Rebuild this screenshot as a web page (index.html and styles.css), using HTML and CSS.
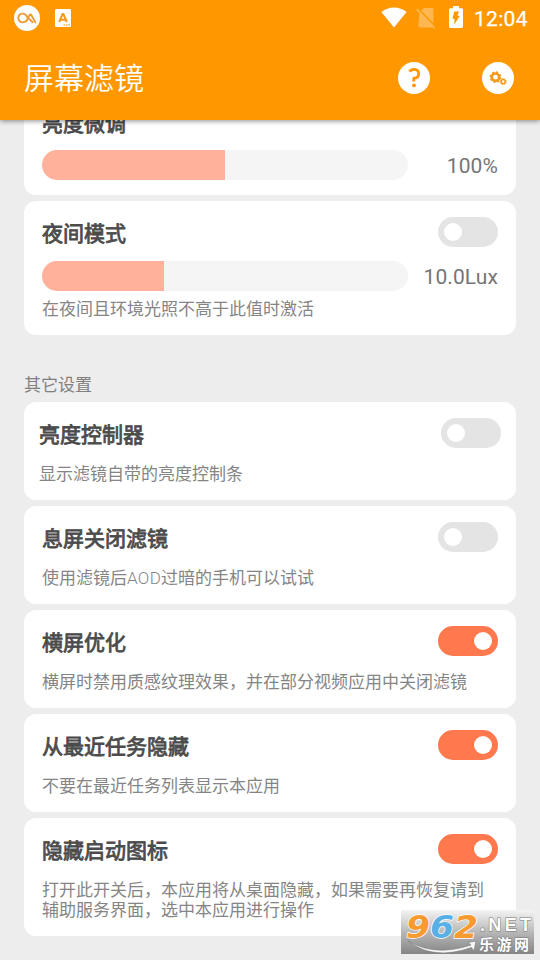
FILE: index.html
```html
<!DOCTYPE html>
<html lang="zh-CN">
<head>
<meta charset="utf-8">
<title>屏幕滤镜</title>
<link rel="stylesheet" href="styles.css">
</head>
<body>
<header class="top">
  <div class="status">
    <svg class="ico-cc" width="26" height="26" viewBox="0 0 26 26"><circle cx="13" cy="13" r="13" fill="#fff"/><path d="M11.8 16.2Q10.6 17.4 8.6 17.4A4.4 4.4 0 1 1 12.2 10.4L13.4 12.2M12.2 16.4L15.5 10.2Q16.4 8.6 17.4 10.2L21.4 17.4M14.6 13.4L18.6 17.2" fill="none" stroke="#ed9a35" stroke-width="1.9" stroke-linejoin="round" stroke-linecap="round"/></svg>
    <svg class="ico-a" width="16" height="18" viewBox="0 0 16 18"><rect width="16" height="18" rx="1.2" fill="#fff"/><path d="M4.2 13L7.6 5H8.4L11.8 13M5.8 10.8H10.2" fill="none" stroke="#f39a1c" stroke-width="2"/><path d="M8.5 15.8h1.6M11 15.8h1.6M13.4 15.8h1.6" stroke="#f3a84a" stroke-width="1.3"/></svg>
    <svg class="ico-wifi" width="26" height="21" viewBox="0 0 26 21"><path d="M.4 5Q6 .4 13 .4T25.6 5L13 20.6z" fill="#fff"/></svg>
    <svg class="ico-sim" width="20" height="22" viewBox="0 0 20 22"><path d="M3.5 4.8L8.2.9H16Q17.4.9 17.4 2.3V20.4H3.6Q2.3 20.4 2.3 19z" fill="#ffb851"/><path d="M1.4 1L19.2 19.4" stroke="#ff9800" stroke-width="1.8"/><path d="M.6 2.2L18.6 20.8" stroke="#ffb851" stroke-width="1.7"/></svg>
    <svg class="ico-bat" width="14" height="22" viewBox="0 0 14 22"><path d="M4 0h6v2.2h2.6Q14 2.2 14 3.6V20.6Q14 22 12.6 22H1.4Q0 22 0 20.6V3.6Q0 2.2 1.4 2.2H4z" fill="#fff"/><path d="M5.2 5.6H10L8.4 9.8H10.8L5.4 18.6V12.8H3.4z" fill="#ff9800"/></svg>
    <span class="clock">12:04</span>
  </div>
  <div class="bar">
    <h1>屏幕滤镜</h1>
    <svg class="help" width="32" height="32" viewBox="0 0 32 32"><circle cx="16" cy="16" r="16" fill="#fff"/><path d="M11.5 9.6Q12.8 7.3 16.1 7.3Q20.7 7.3 20.7 11.9Q20.7 16 15.8 16.2V19.6" fill="none" stroke="#ff9800" stroke-width="2.8" stroke-linejoin="round"/><circle cx="16" cy="23.4" r="1.9" fill="#ff9800"/></svg>
    <svg width="32" height="32" viewBox="0 0 32 32"><circle cx="16" cy="16" r="16" fill="#fff"/><g fill="none" stroke="#f69a16"><circle cx="13.5" cy="15.2" r="3.7" stroke-width="2.6"/><circle cx="13.5" cy="15.2" r="5.2" stroke-width="1.4" stroke-dasharray="2.04 2.04"/><circle cx="21.2" cy="19.6" r="2.1" stroke-width="1.5"/><circle cx="21.2" cy="19.6" r="3" stroke-width="1" stroke-dasharray="1.18 1.18"/></g></svg>
  </div>
</header>
<main>
  <section class="card fine">
    <div class="row"><h2>亮度微调</h2></div>
    <div class="row"><div class="slider"><i class="half"></i></div><span class="value">100%</span></div>
  </section>
  <section class="card night">
    <div class="row"><h2>夜间模式</h2><span class="switch"></span></div>
    <div class="row"><div class="slider"><i class="third"></i></div><span class="value">10.0Lux</span></div>
    <p>在夜间且环境光照不高于此值时激活</p>
  </section>
  <div class="label">其它设置</div>
  <section class="card wide">
    <div class="row"><h2>亮度控制器</h2><span class="switch"></span></div>
    <p>显示滤镜自带的亮度控制条</p>
  </section>
  <section class="card">
    <div class="row"><h2>息屏关闭滤镜</h2><span class="switch"></span></div>
    <p>使用滤镜后<span class="latin">AOD</span>过暗的手机可以试试</p>
  </section>
  <section class="card">
    <div class="row"><h2>横屏优化</h2><span class="switch on"></span></div>
    <p>横屏时禁用质感纹理效果，并在部分视频应用中关闭滤镜</p>
  </section>
  <section class="card">
    <div class="row"><h2>从最近任务隐藏</h2><span class="switch on"></span></div>
    <p>不要在最近任务列表显示本应用</p>
  </section>
  <section class="card tall">
    <div class="row"><h2>隐藏启动图标</h2><span class="switch on"></span></div>
    <p>打开此开关后，本应用将从桌面隐藏，如果需要再恢复请到<br>辅助服务界面，选中本应用进行操作</p>
  </section>
</main>
<svg class="mark" width="134" height="46" viewBox="0 0 134 46">
  <defs>
    <linearGradient id="g" x1="0" y1="0" x2="0" y2="1"><stop offset="0" stop-color="#f4f4f4"/><stop offset=".5" stop-color="#b8b8b8"/><stop offset="1" stop-color="#858585"/></linearGradient>
  </defs>
  <rect x="0" y="0" width="133" height="44" fill="url(#g)"/>
  <g class="digits">
    <text x="5" y="28" textLength="24" lengthAdjust="spacingAndGlyphs">9</text>
    <text class="blue" x="29" y="28" textLength="24" lengthAdjust="spacingAndGlyphs">6</text>
    <text x="53" y="28" textLength="24" lengthAdjust="spacingAndGlyphs">2</text>
  </g>
  <path d="M7 31Q34 47 70 35L67 32.5L75 31L73 41L70.5 37.5Q32 51 7 31z" fill="#f6f6f6" stroke="#777" stroke-width=".6"/>
  <text class="net" x="79" y="21" textLength="51">.NET</text>
  <text class="site" x="78" y="40" textLength="50">乐游网</text>
</svg>
</body>
</html>
```
FILE: styles.css
```css
* { box-sizing: border-box; margin: 0; padding: 0; }
body {
  width: 540px;
  height: 960px;
  overflow: hidden;
  position: relative;
  background: #ededed;
  font-family: Roboto, "Noto Sans CJK SC", sans-serif;
}
svg { display: block; flex: none; }
.top {
  position: relative;
  z-index: 2;
  height: 120px;
  background: #ff9800;
  box-shadow: 0 1px 5px rgba(0, 0, 0, .45);
  color: #fff;
}
.status { display: flex; align-items: center; height: 36px; padding: 0 12px 0 14px; }
.ico-a { margin-left: 15px; }
.ico-wifi { margin-left: auto; margin-top: -2px; }
.ico-sim { margin-left: 9px; }
.ico-bat { margin-left: 13px; margin-top: -2px; }
.clock { width: 54px; margin-left: 11px; padding-top: 2px; font-size: 21px; line-height: 36px; letter-spacing: .3px; -webkit-text-stroke: .25px #fff; white-space: nowrap; }
.bar { display: flex; align-items: center; height: 84px; padding: 0 26px 0 24px; }
h1 { flex: 1; padding-top: 2px; font-size: 30px; line-height: 40px; font-weight: 350; }
.help { margin-right: 52px; }
main { display: flex; flex-direction: column; gap: 6px; margin-top: -30px; padding: 0 24px; }
.card { height: 98px; padding: 16px 18px 0; border-radius: 12px; background: #fff; }
.fine { height: 105px; }
.night { height: 134px; }
.tall { height: 118px; }
.wide { padding: 16px 15px 0; }
.row { display: flex; align-items: center; justify-content: space-between; height: 30px; }
.row + .row { margin-top: 14px; }
h2 { font-size: 21px; line-height: 30px; font-weight: 400; -webkit-text-stroke: .8px #4b4b4b; color: #4b4b4b; padding-top: 4px; }
.fine h2 { padding-top: 5px; }
.switch { width: 60px; height: 30px; padding: 6px; border-radius: 15px; background: #e4e4e4; display: flex; }
.switch::before { content: ""; width: 18px; height: 18px; border-radius: 50%; background: #fff; }
.switch.on { background: #ff784e; justify-content: flex-end; }
.slider { width: 366px; height: 30px; border-radius: 15px; background: #f5f5f5; overflow: hidden; }
.slider i { display: block; height: 100%; background: #ffb19b; }
.half { width: 183px; }
.third { width: 122px; }
.value { font-size: 21px; line-height: 30px; color: #757575; padding-top: 2px; letter-spacing: .1px; }
p { font-size: 17px; line-height: 20px; color: #858585; margin-top: 16px; white-space: nowrap; }
.night p { margin-top: 8px; }
.latin { font-weight: 300; letter-spacing: .3px; }
.label { height: 55px; padding-top: 34px; font-size: 17px; line-height: 20px; color: #808080; }
.mark { position: absolute; z-index: 3; left: 401px; top: 910px; overflow: visible; }
.digits { font: italic 700 32px "DejaVu Sans", sans-serif; fill: #f79a2f; stroke: #fff; stroke-width: 1.4px; paint-order: stroke; }
.blue { fill: #58b0e6; }
.net { font: 700 18px "Liberation Sans", sans-serif; fill: #fff; stroke: #777; stroke-width: 1px; paint-order: stroke; }
.site { font: 700 15px "Noto Sans CJK SC", sans-serif; fill: #fff; stroke: #777; stroke-width: 1px; paint-order: stroke; }
```
